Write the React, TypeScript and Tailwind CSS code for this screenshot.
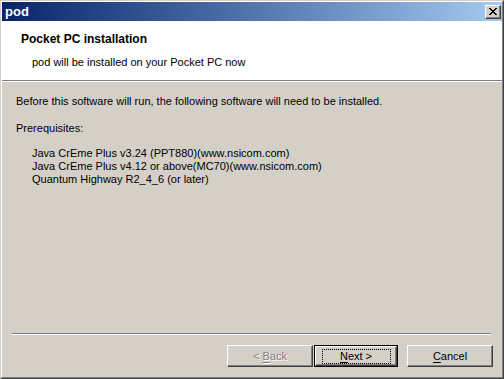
import React from 'react'

const font = { fontFamily: '"Liberation Sans", Arial, sans-serif' }

function Btn({ label, mnemonic, rest, disabled, isDefault }: { label?: string; mnemonic: string; rest: string; disabled?: boolean; isDefault?: boolean }) {
  const text = (
    <span className={disabled ? 'text-[#808080] [text-shadow:1px_1px_0_#fff]' : 'text-black'}>
      {label}
      <span className="underline underline-offset-2">{mnemonic}</span>
      {rest}
    </span>
  )
  const face = (
    <div className="flex h-full w-full items-center justify-center border border-t-white border-l-white border-r-[#404040] border-b-[#404040] bg-[#d4d0c8] shadow-[inset_-1px_-1px_0_#808080]">
      {isDefault ? (
        <div className="flex h-[15px] w-[69px] items-center justify-center border border-dotted border-black">{text}</div>
      ) : (
        text
      )}
    </div>
  )
  if (isDefault) {
    return <div className="h-[22px] w-[84px] border border-black">{face}</div>
  }
  return <div className="h-[22px] w-[86px]">{face}</div>
}

export default function App() {
  return (
    <div className="h-[379px] w-[504px] bg-[#d4d0c8] text-[11px] leading-[13px]" style={font}>
      <div className="flex h-full w-full flex-col border border-t-[#d4d0c8] border-l-[#d4d0c8] border-r-[#404040] border-b-[#404040]">
        <div className="flex h-full w-full flex-col border border-t-white border-l-white border-r-[#808080] border-b-[#808080]">
          {/* Title bar */}
          <div className="flex h-[19px] shrink-0 items-center justify-between bg-gradient-to-r from-[#0a246a] to-[#a6caf0] pl-[3px] pr-[1px]">
            <span className="text-[13px] font-bold leading-none text-white">pod</span>
            <div className="flex h-[14px] w-[16px] items-center justify-center border border-t-white border-l-white border-r-[#404040] border-b-[#404040] bg-[#d4d0c8] shadow-[inset_-1px_-1px_0_#808080]">
              <svg width="8" height="7" viewBox="0 0 8 7" shapeRendering="crispEdges">
                <path d="M0 0h2v1h-2zM6 0h2v1h-2zM1 1h2v1h-2zM5 1h2v1h-2zM2 2h4v1h-4zM3 3h2v1h-2zM2 4h4v1h-4zM1 5h2v1h-2zM5 5h2v1h-2zM0 6h2v1h-2zM6 6h2v1h-2z" fill="#000" />
              </svg>
            </div>
          </div>

          {/* Header */}
          <div className="h-[60px] shrink-0 border-b border-b-[#808080] bg-white pt-[12px]">
            <div className="pl-[19px] text-[12px] font-bold leading-[13px]">Pocket PC installation</div>
            <div className="mt-[10px] pl-[30px]">pod will be installed on your Pocket PC now</div>
          </div>
          <div className="h-[1px] shrink-0 bg-white" />

          {/* Body */}
          <div className="flex-1 pl-[14px] pt-[13px] text-black">
            <div>Before this software will run, the following software will need to be installed.</div>
            <div className="mt-[14px]">Prerequisites:</div>
            <div className="mt-[12px] pl-[16px]">
              <div>Java CrEme Plus v3.24 (PPT880)(www.nsicom.com)</div>
              <div>Java CrEme Plus v4.12 or above(MC70)(www.nsicom.com)</div>
              <div>Quantum Highway R2_4_6 (or later)</div>
            </div>
          </div>

          {/* Bottom */}
          <div className="ml-[10px] mr-[11px] h-[2px] shrink-0 border-t border-t-[#808080] border-b border-b-white" />
          <div className="flex shrink-0 justify-end pb-[10px] pr-[9px] pt-[10px]">
            <Btn label="< " mnemonic="B" rest="ack" disabled />
            <div className="ml-[1px]">
              <Btn mnemonic="N" rest="ext >" isDefault />
            </div>
            <div className="ml-[9px]">
              <Btn mnemonic="C" rest="ancel" />
            </div>
          </div>
        </div>
      </div>
    </div>
  )
}
